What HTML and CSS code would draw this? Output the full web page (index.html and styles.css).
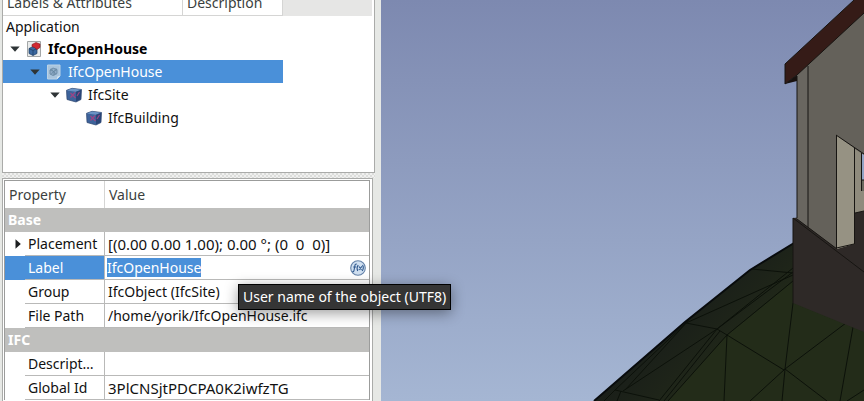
FILE: index.html
```html
<!DOCTYPE html>
<html lang="en">
<head>
<meta charset="utf-8">
<title>IfcOpenHouse</title>
<link rel="stylesheet" href="styles.css">
</head>
<body>
<svg class="defs" aria-hidden="true">
  <symbol id="arrow-down" viewBox="0 0 10 6"><path d="M0.3 0.5h9.4L5 5.8z" fill="#2e3436"/></symbol>
  <symbol id="cube" viewBox="0 0 16 16">
    <path d="M.5 3.300 6 1.300 15.500 2.500 15 12.500 10 15 1 12.500z" fill="#3d639b" stroke="#2d436c" stroke-width=".7"/>
    <path d="M.8 3.400 6 1.600 15.200 2.700 10 4.800z" fill="#6b93c4"/>
    <path d="M10 4.800 15.200 2.700 14.800 12.300 10 14.600z" fill="#2a4576"/>
    <path d="m4.500 6 5 5M9 5.500l-4.500 5M11 9l2.500-4" fill="none" stroke="#9c4585" stroke-width="1.200"/>
  </symbol>
</svg>
<div class="window">
  <aside class="dock">
    <section class="tree">
      <header class="tree-head"><span class="col-labels">Labels &amp; Attributes</span><span class="col-desc">Description</span></header>
      <div class="caption">Application</div>
      <ul class="nodes">
        <li class="node level-1 active">
          <svg class="arrow"><use href="#arrow-down"/></svg>
          <svg class="icon" viewBox="0 0 16 16">
            <path d="M1.500.5h13v15h-13z" fill="#e9ebeb" stroke="#a3a6a7"/>
            <path d="m3 7.500 4-2 4 2v5l-4 2-4-2z" fill="#3a679f" stroke="#1d3c61" stroke-width=".7"/>
            <path d="m3 7.500 4 2 4-2M7 9.500v5" fill="none" stroke="#1d3c61" stroke-width=".7"/>
            <path d="M6 3.500 10 1.500l4 1.500v3.500l-3 2-2.500-2-2.500-1z" fill="#d22932" stroke="#871820" stroke-width=".6"/>
          </svg>
          <span>IfcOpenHouse</span>
        </li>
        <li class="node level-2 selected">
          <svg class="arrow"><use href="#arrow-down"/></svg>
          <svg class="icon" viewBox="0 0 16 16">
            <path d="M1.500 1h12.500v11l-3 3h-9.500z" fill="#a9c4dc" stroke="#bcd3e6"/>
            <path d="m11 15 .5-2.500L14 12z" fill="#e2edf5"/>
            <path d="M4 6 7 4l4 1.500v4l-4 2-3-1.500zM4 6l4 1.500 3-2M8 7.500v4M5 4.500l5 6M10 4.500l-5 6" fill="#8fabc7" stroke="#64859f" stroke-width=".8"/>
          </svg>
          <span>IfcOpenHouse</span>
        </li>
        <li class="node level-3">
          <svg class="arrow"><use href="#arrow-down"/></svg>
          <svg class="icon"><use href="#cube"/></svg>
          <span>IfcSite</span>
        </li>
        <li class="node level-4">
          <svg class="icon"><use href="#cube"/></svg>
          <span>IfcBuilding</span>
        </li>
      </ul>
    </section>
    <div class="splitter"></div>
    <section class="properties">
      <table class="grid">
        <colgroup><col class="c-mark"><col class="c-name"><col></colgroup>
        <thead>
          <tr><th class="first" colspan="2">Property</th><th>Value</th></tr>
        </thead>
        <tbody>
          <tr class="group"><th colspan="3">Base</th></tr>
          <tr><td class="mark"><svg class="arrow-right" viewBox="0 0 6 10"><path d="M.5.3v9.400L5.800 5z" fill="#1c1f20"/></svg></td><td class="name">Placement</td><td class="value numeric">[(0.00 0.00 1.00); 0.00 °; (0&nbsp; 0&nbsp; 0)]</td></tr>
          <tr class="editing"><td class="mark"></td><td class="name"><label for="label-value">Label</label></td>
            <td class="value"><div class="editor"><input id="label-value" type="text" value="IfcOpenHouse" size="12"><button type="button" class="fx" aria-label="Expression">
              <svg viewBox="0 0 16 16"><circle cx="8" cy="8" r="7.300" fill="#cfdff0" stroke="#6482a8" stroke-width="1.100"/><path d="M6.800 4.200c-1.300-.5-1.800.3-2 1.800L4.100 10c-.2 1.500-.8 2-1.800 1.600M3.200 7h3M8.200 5C6.800 7 6.800 9 7.700 11M9 6.500l2.500 3.500M12 6.300 8.800 10M12.500 5c1.200 1.800 1 4-.3 6" fill="none" stroke="#2f588e" stroke-width="1.100"/></svg>
            </button></div></td></tr>
          <tr><td class="mark"></td><td class="name">Group</td><td class="value">IfcObject (IfcSite)</td></tr>
          <tr><td class="mark"></td><td class="name">File Path</td><td class="value">/home/yorik/IfcOpenHouse.ifc</td></tr>
          <tr class="group"><th colspan="3">IFC</th></tr>
          <tr><td class="mark"></td><td class="name">Descript…</td><td class="value"></td></tr>
          <tr><td class="mark"></td><td class="name">Global Id</td><td class="value numeric">3PlCNSjtPDCPA0K2iwfzTG</td></tr>
        </tbody>
      </table>
    </section>
  </aside>
  <main class="view">
    <svg class="scene" viewBox="381 0 483 401" preserveAspectRatio="xMaxYMax slice">
      <defs>
        <linearGradient id="hill" gradientUnits="userSpaceOnUse" x1="690" y1="310" x2="745" y2="365">
          <stop offset="0" stop-color="#1a1f19"/><stop offset=".45" stop-color="#1e2419"/><stop offset="1" stop-color="#232c19"/>
        </linearGradient>
      </defs>
      <path d="M594 401 685 322 750 270 797 241 864 300V401z" fill="url(#hill)"/>
      <path d="M727 335 793 281 793 303 864 332V401H668z" fill="#232c19"/>
      <path d="M594 401 685 322 750 270 794 243" fill="none" stroke="#080b0d" stroke-width="2"/>
      <g fill="none" stroke="#0c110a" stroke-width="1">
        <path d="M686 323 717 329 727 335 784 370M727 335 724 401M686 323 793 275M717 329 793 268M717 329 793 272M727 335 793 281M752 269 793 273"/>
        <path d="M717 329 623 391M717 329 659 401M720 331 664 401M727 335 668 401M686 323 615 390 659 400M689 320 625 390M615 390 604 401M621 391 617 401"/>
        <path d="M793 303 785 369 782 401M846 323 785 369 750 401M785 369 827 401M853 327 840 401M847 401 864 390"/>
      </g>
      <path d="M793 218 864 211V332L793 303z" fill="#2e2927"/>
      <path d="M797 70 864 12V211L854 213V244L837 249 797 219z" fill="#64615a"/>
      <path d="M797 70 808 61V227L797 219z" fill="#696660"/>
      <path d="M836 135 854 148V244L837 249z" fill="#969283"/>
      <path d="M855 149 864 155V211L855 213z" fill="#8f8b7d"/>
      <path d="M861 153 864 155V180H861z" fill="#91a3c5"/>
      <path d="M861 180H864V191H861z" fill="#6a695f"/>
      <path d="M785 64 854 0H864V13L797 75 785 84z" fill="#351b17"/>
      <path d="M785 84 797 75V81z" fill="#18110f"/>
      <g fill="none" stroke="#171512" stroke-width="1">
        <path d="M854 0 785 64V84L797 75 864 13M797 76V218M808 66V227M836.500 135V248L854 244M836 135 864 154M854.500 148V244M861.500 153V191M861 180H864M855 213 864 211M793 303V218L864 272M797 219 837 249"/>
      </g>
    </svg>
  </main>
  <div class="tooltip" role="tooltip">User name of the object (UTF8)</div>
</div>
</body>
</html>
```
FILE: styles.css
```css
* { box-sizing: border-box; }
html, body { height: 100%; }
body {
  margin: 0;
  overflow: hidden;
  background: #e6e8e5;
  color: #111;
  font: 14px/22px "Noto Sans", sans-serif;
}
.defs { display: none; }
.window { display: flex; height: 100%; position: relative; }
.dock {
  flex: none;
  width: 381px;
  padding: 0 6px 0 2px;
  display: flex;
  flex-direction: column;
  white-space: nowrap;
}
.tree {
  flex: none;
  height: 173px;
  background: #fff;
  border: 1px solid #aaaba9;
  border-top: 0;
}
.tree-head {
  display: flex;
  height: 16px;
  margin-right: 2px;
  background: #e6e6e5;
  color: #3b3f40;
  line-height: 24px;
}
.tree-head span {
  display: flex;
  align-items: flex-end;
  padding: 0 4px;
  background: #fff;
  border-right: 1px solid #d5d5d4;
  border-bottom: 1px solid #d5d5d4;
}
.col-labels { width: 180px; }
.col-desc { width: 100px; }
.caption { height: 21px; padding-left: 3px; }
.nodes { margin: 0; padding: 0; list-style: none; width: 280px; }
.node { display: flex; align-items: center; height: 23px; padding-left: 7px; }
.level-2 { padding-left: 27px; }
.level-3 { padding-left: 47px; }
.level-4 { padding-left: 82px; }
.arrow { width: 10px; height: 6px; margin-right: 5px; }
.icon { width: 16px; height: 16px; margin: 0 6px 0 1px; }
.active { font-weight: 700; color: #000; }
.selected { background: #4a90d9; color: #fff; }
.splitter {
  flex: none;
  height: 5px;
  background: repeating-conic-gradient(#dcdddb 0 25%, #f0f0ef 0 50%) 0 0 / 4px 4px;
}
.properties {
  flex: 1;
  min-height: 0;
  margin-right: 2px;
  padding: 1px 1px 0;
  background: #fff;
  border: 1px solid #aaaba9;
  border-bottom: 0;
  overflow: hidden;
}
.grid {
  width: calc(100% - 1px);
  table-layout: fixed;
  border-collapse: separate;
  border-spacing: 0;
  border: 1px solid #9b9c9b;
  border-bottom: 0;
}
.c-mark { width: 20px; }
.c-name { width: 80px; }
.grid th, .grid td { height: 24px; padding: 0 3px; text-align: left; }
.grid thead th { height: 27px; padding: 0 4px; font-weight: 400; color: #3b3f40; }
.grid thead .first { border-right: 1px solid #d5d5d4; }
.grid .group th { background: #bfbfbd; color: #fff; font-weight: 700; }
.grid .mark { padding: 0; line-height: 0; }
.arrow-right { display: block; width: 6px; height: 10px; margin-left: 10px; }
.grid .name {
  border-right: 1px solid #b9b9b8;
  border-bottom: 1px solid #b9b9b8;
}
.grid .value { border-bottom: 1px solid #b9b9b8; }
.grid .numeric { font-size: 15px; }
.editing .mark, .editing .name { background: #4a90d9; color: #fff; }
.editor { display: flex; align-items: center; justify-content: space-between; }
.editor input {
  field-sizing: content;
  height: 19px;
  margin-left: -1px;
  padding: 0;
  border: 0;
  background: #4a90d9;
  color: #fff;
  font: inherit;
}
.fx { width: 16px; height: 16px; padding: 0; border: 0; background: none; line-height: 0; }
.fx svg { width: 16px; height: 16px; }
.view {
  flex: 1;
  min-width: 0;
  background: linear-gradient(#7d89b0, #a5b6d3);
}
.scene { display: block; width: 100%; height: 100%; }
.tooltip {
  position: absolute;
  left: 238px;
  top: 284px;
  padding: 1px 4px;
  border: 1px solid #000;
  background: #353535;
  color: #fff;
  white-space: nowrap;
  box-shadow: 0 3px 14px rgba(0, 0, 0, .4);
}
```
